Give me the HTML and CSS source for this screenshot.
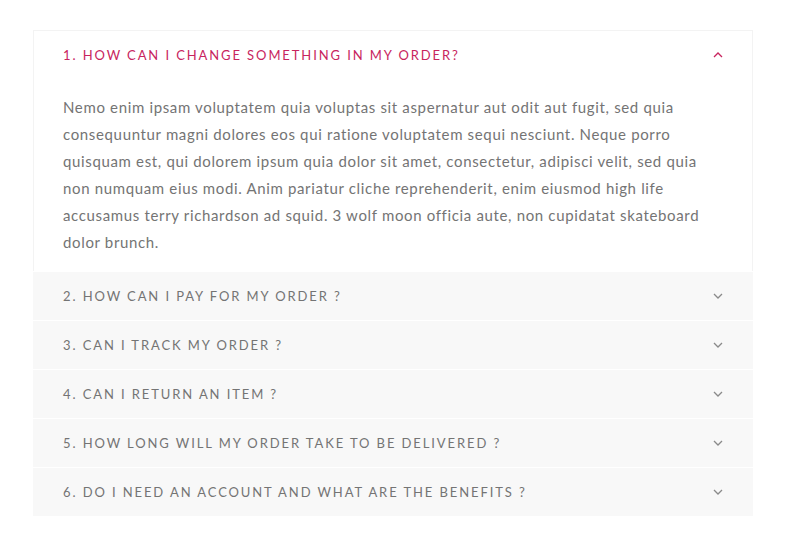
FILE: index.html
```html
<!DOCTYPE html>
<html>
<head>
<meta charset="utf-8">
<link rel="stylesheet" href="styles.css">
</head>
<body>
<div class="faq">
  <div class="item open">
    <div class="head">
      <span class="title">1. How can I change something in my order?</span>
      <svg class="chev" width="10" height="6" viewBox="0 0 10 6"><path d="M1 5 L5 1 L9 5" fill="none" stroke="currentColor" stroke-width="1.3"/></svg>
    </div>
    <div class="body">Nemo enim ipsam voluptatem quia voluptas sit aspernatur aut odit aut fugit, sed quia<br>consequuntur magni dolores eos qui ratione voluptatem sequi nesciunt. Neque porro<br>quisquam est, qui dolorem ipsum quia dolor sit amet, consectetur, adipisci velit, sed quia<br>non numquam eius modi. Anim pariatur cliche reprehenderit, enim eiusmod high life<br>accusamus terry richardson ad squid. 3 wolf moon officia aute, non cupidatat skateboard<br>dolor brunch.</div>
  </div>
  <div class="item">
    <div class="head">
      <span class="title">2. How can I pay for my order ?</span>
      <svg class="chev" width="10" height="6" viewBox="0 0 10 6"><path d="M1 1 L5 5 L9 1" fill="none" stroke="currentColor" stroke-width="1.3"/></svg>
    </div>
  </div>
  <div class="item">
    <div class="head">
      <span class="title">3. Can I track my order ?</span>
      <svg class="chev" width="10" height="6" viewBox="0 0 10 6"><path d="M1 1 L5 5 L9 1" fill="none" stroke="currentColor" stroke-width="1.3"/></svg>
    </div>
  </div>
  <div class="item">
    <div class="head">
      <span class="title">4. Can I return an item ?</span>
      <svg class="chev" width="10" height="6" viewBox="0 0 10 6"><path d="M1 1 L5 5 L9 1" fill="none" stroke="currentColor" stroke-width="1.3"/></svg>
    </div>
  </div>
  <div class="item">
    <div class="head">
      <span class="title">5. How long will my order take to be delivered ?</span>
      <svg class="chev" width="10" height="6" viewBox="0 0 10 6"><path d="M1 1 L5 5 L9 1" fill="none" stroke="currentColor" stroke-width="1.3"/></svg>
    </div>
  </div>
  <div class="item">
    <div class="head">
      <span class="title">6. Do I need an account and what are the benefits ?</span>
      <svg class="chev" width="10" height="6" viewBox="0 0 10 6"><path d="M1 1 L5 5 L9 1" fill="none" stroke="currentColor" stroke-width="1.3"/></svg>
    </div>
  </div>
</div>
</body>
</html>
```
FILE: styles.css
```css
html, body {
  margin: 0;
  padding: 0;
  background: #ffffff;
}
body {
  font-family: "Lato", "Liberation Sans", sans-serif;
  color: #747474;
}
.faq {
  width: 720px;
  margin: 30px 0 0 33px;
  display: flex;
  flex-direction: column;
  gap: 1px;
}
.item {
  background: #f8f8f8;
}
.item.open {
  background: #ffffff;
  border: 1px solid #f3f3f3;
  border-bottom: none;
}
.head {
  height: 48px;
  display: flex;
  align-items: center;
  justify-content: space-between;
  padding: 0 30px 0 30px;
}
.item.open .head {
  height: 47px;
  padding: 0 29px;
}
.title {
  font-size: 13px;
  letter-spacing: 1.9px;
  text-transform: uppercase;
  color: #747474;
}
.item.open .title {
  color: #c8245e;
}
.chev {
  color: #8a8a8a;
}
.item.open .chev {
  color: #c8245e;
}
.body {
  padding: 16px 20px 15px 29px;
  font-size: 15px;
  line-height: 27px;
  letter-spacing: 0.65px;
  white-space: nowrap;
  color: #747474;
}
```
